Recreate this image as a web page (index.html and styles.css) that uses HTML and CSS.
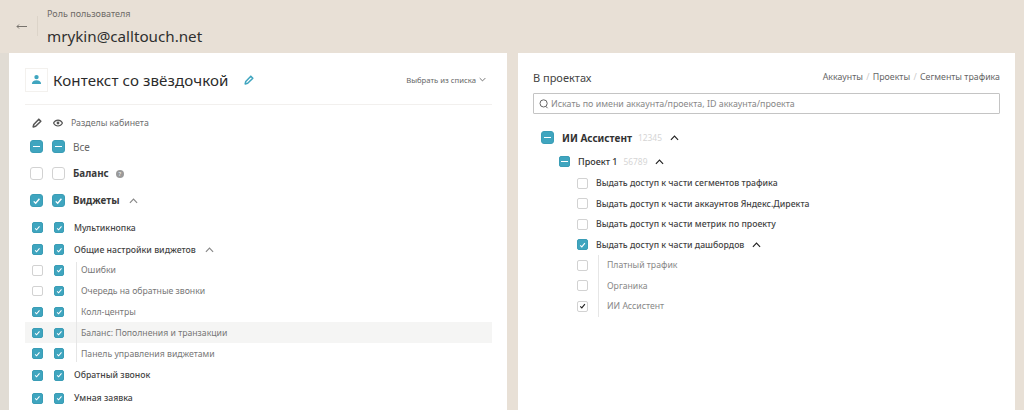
FILE: index.html
```html
<!DOCTYPE html>
<html lang="ru">
<head>
<meta charset="utf-8">
<title>Роль пользователя</title>
<link rel="stylesheet" href="styles.css">
</head>
<body>
<svg class="defs" width="0" height="0" aria-hidden="true">
  <symbol id="up" viewBox="0 0 10 6"><path d="M1 5l4-4 4 4" fill="none" stroke="currentColor" stroke-width="1.3"/></symbol>
  <symbol id="down" viewBox="0 0 10 6"><path d="M1 1l4 4 4-4" fill="none" stroke="currentColor" stroke-width="1.3"/></symbol>
  <symbol id="tick" viewBox="0 0 12 12"><path d="M3 6.4l2.1 2.1L9.2 3.6" fill="none" stroke="currentColor" stroke-width="1.5"/></symbol>
  <symbol id="pen" viewBox="0 0 12 12"><path d="M8.2 1.4l2.4 2.4-6.2 6.2-3 .7.7-3z" fill="none" stroke="currentColor" stroke-width="1.8" stroke-linejoin="round"/></symbol>
</svg>
<header class="top">
  <a class="back"><svg width="11" height="7" viewBox="0 0 11 7"><path d="M11 3.5H1M3 1.5L1 3.5 3 5.5" fill="none" stroke="#77736d" stroke-width="1"/></svg></a>
  <div class="top-text">
    <div class="role">Роль пользователя</div>
    <div class="email">mrykin@calltouch.net</div>
  </div>
</header>
<main class="panels">
  <section class="panel left">
    <div class="title-row">
      <span class="avatar"><svg width="11" height="11" viewBox="0 0 12 12"><circle cx="6" cy="3.4" r="2.4" fill="#3fa5bf"/><path d="M1 11c0-3 2-4.2 5-4.2s5 1.2 5 4.2z" fill="#3fa5bf"/></svg></span>
      <h1>Контекст со звёздочкой</h1>
      <svg class="title-pen" width="10" height="10"><use href="#pen"/></svg>
      <span class="picker">Выбрать из списка <svg width="7" height="5"><use href="#down"/></svg></span>
    </div>
    <div class="legend">
      <svg class="legend-pen" width="10" height="10"><use href="#pen"/></svg>
      <svg class="legend-eye" width="10" height="8" viewBox="0 0 12 9"><path d="M.6 4.5C2 2 3.8 1 6 1s4 1 5.4 3.5C10 7 8.2 8 6 8S2 7 .6 4.5z" fill="none" stroke="#555" stroke-width="1.3"/><circle cx="6" cy="4.5" r="1.7" fill="#555"/></svg>
      <span>Разделы кабинета</span>
    </div>

    <div class="row big"><span class="box on big-box"><i class="dash"></i></span><span class="box on big-box"><i class="dash"></i></span><span class="lbl plain-lg">Все</span></div>
    <div class="row big"><span class="box big-box"></span><span class="box big-box"></span><span class="lbl bold-lg">Баланс</span><span class="help">?</span></div>
    <div class="row big"><span class="box on big-box"><svg><use href="#tick"/></svg></span><span class="box on big-box"><svg><use href="#tick"/></svg></span><span class="lbl bold-lg">Виджеты</span><svg class="chev grey" width="9" height="6"><use href="#up"/></svg></div>

    <div class="row small h23 gap-top"><span class="box on"><svg><use href="#tick"/></svg></span><span class="box on"><svg><use href="#tick"/></svg></span><span class="lbl med">Мультикнопка</span></div>
    <div class="row small h21"><span class="box on"><svg><use href="#tick"/></svg></span><span class="box on"><svg><use href="#tick"/></svg></span><span class="lbl med">Общие настройки виджетов</span><svg class="chev grey" width="9" height="6"><use href="#up"/></svg></div>
    <div class="nest">
      <div class="row small sub"><span class="box"></span><span class="box on"><svg><use href="#tick"/></svg></span><span class="lbl sublbl">Ошибки</span></div>
      <div class="row small sub"><span class="box"></span><span class="box on"><svg><use href="#tick"/></svg></span><span class="lbl sublbl">Очередь на обратные звонки</span></div>
      <div class="row small sub"><span class="box on"><svg><use href="#tick"/></svg></span><span class="box on"><svg><use href="#tick"/></svg></span><span class="lbl sublbl">Колл-центры</span></div>
      <div class="row small sub hl"><span class="box on"><svg><use href="#tick"/></svg></span><span class="box on"><svg><use href="#tick"/></svg></span><span class="lbl sublbl">Баланс: Пополнения и транзакции</span></div>
      <div class="row small sub"><span class="box on"><svg><use href="#tick"/></svg></span><span class="box on"><svg><use href="#tick"/></svg></span><span class="lbl sublbl">Панель управления виджетами</span></div>
    </div>
    <div class="row small h23"><span class="box on"><svg><use href="#tick"/></svg></span><span class="box on"><svg><use href="#tick"/></svg></span><span class="lbl med">Обратный звонок</span></div>
    <div class="row small h23"><span class="box on"><svg><use href="#tick"/></svg></span><span class="box on"><svg><use href="#tick"/></svg></span><span class="lbl med">Умная заявка</span></div>
  </section>

  <section class="panel right">
    <div class="right-head">
      <h2>В проектах</h2>
      <nav class="crumbs">Аккаунты <b>/</b> Проекты <b>/</b> Сегменты трафика</nav>
    </div>
    <div class="search">
      <svg width="10" height="10" viewBox="0 0 10 10"><circle cx="4.6" cy="4.4" r="3.6" fill="none" stroke="#666" stroke-width="1"/><path d="M6.6 7.2l2 2" stroke="#666"/></svg>
      <span>Искать по имени аккаунта/проекта, ID аккаунта/проекта</span>
    </div>
    <div class="tree">
      <div class="t-acc"><span class="box on big-box"><i class="dash"></i></span><span class="acc-name">ИИ Ассистент</span><span class="num">12345</span><svg class="chev dark" width="9" height="6"><use href="#up"/></svg></div>
      <div class="t-proj"><span class="box on"><i class="dash"></i></span><span class="proj-name">Проект 1</span><span class="num n2">56789</span><svg class="chev dark" width="9" height="6"><use href="#up"/></svg></div>
      <div class="t-opts">
        <div class="t-row"><span class="box"></span><span class="opt">Выдать доступ к части сегментов трафика</span></div>
        <div class="t-row"><span class="box"></span><span class="opt">Выдать доступ к части аккаунтов Яндекс.Директа</span></div>
        <div class="t-row"><span class="box"></span><span class="opt">Выдать доступ к части метрик по проекту</span></div>
        <div class="t-row"><span class="box on"><svg><use href="#tick"/></svg></span><span class="opt">Выдать доступ к части дашбордов</span><svg class="chev dark" width="9" height="6"><use href="#up"/></svg></div>
        <div class="t-nest">
          <div class="t-row"><span class="box"></span><span class="t-sub">Платный трафик</span></div>
          <div class="t-row"><span class="box"></span><span class="t-sub">Органика</span></div>
          <div class="t-row"><span class="box"><svg class="blk"><use href="#tick"/></svg></span><span class="t-sub">ИИ Ассистент</span></div>
        </div>
      </div>
    </div>
  </section>
</main>
</body>
</html>
```

FILE: styles.css
```css
* { box-sizing: border-box; }
html, body { margin: 0; height: 410px; overflow: hidden; }
body {
  background: #e8e0d6;
  font-family: "Noto Sans", "Open Sans", sans-serif;
  color: #3a3a3a;
  display: flex;
  flex-direction: column;
}
.defs { position: absolute; }
.top { height: 53px; display: flex; align-items: flex-start; padding-left: 16px; }
.back { margin-top: 16px; width: 22px; border-right: 1px solid #dcd4c9; height: 20px; display: flex; align-items: center; }
.top-text { margin-left: 9px; }
.role { font-size: 9px; line-height: 12px; color: #6d6a66; margin-top: 8px; }
.email { font-size: 15.2px; line-height: 20px; color: #2f2f2f; margin-top: 6px; }

.panels { flex: 1; display: flex; gap: 11px; padding-left: 9px; min-height: 0; background: linear-gradient(90deg, #e1dcd4 9px, transparent 9px); }
.panel { background: #fff; overflow: hidden; }
.left { width: 498px; padding: 0 15px 0 16px; }
.right { width: 497px; padding: 0 15px 0 15px; }

.title-row { height: 52px; display: flex; align-items: center; border-bottom: 1px solid #f2f0ee; margin-bottom: 8px; padding-top: 2px; }
.avatar { width: 23px; height: 24px; border: 1px solid #f3f1ee; display: flex; align-items: center; justify-content: center; }
h1 { font-size: 15.1px; font-weight: 400; margin: 0 0 0 5px; color: #2b2b2b; letter-spacing: .1px; }
.title-pen { color: #3fa5bf; margin-left: 15px; }
.picker { margin-left: auto; margin-right: 6px; font-size: 7.7px; color: #666; display: flex; align-items: center; gap: 3px; }

.legend { height: 20px; display: flex; align-items: center; padding-left: 7px; font-size: 8.8px; color: #6f6f6f; }
.legend-pen { color: #555; }
.legend-eye { margin-left: 11px; }
.legend span { margin-left: 8px; }

.row { display: flex; align-items: center; }
.box {
  width: 11px; height: 11px; flex: none; border: 1px solid #d2d2d2; border-radius: 2px; background: #fff;
  display: flex; align-items: center; justify-content: center; color: #fff;
}
.box svg { width: 10px; height: 10px; color: #fff; }
.box svg.blk { color: #222; }
.box.on { background: #3fa5bf; border-color: #3a9db6; }
.big-box { width: 13px; height: 13px; border-radius: 3px; }
.big-box svg { width: 12px; height: 12px; }
.dash { width: 7px; height: 1.5px; background: #fff; display: block; }
.row.small .box { width: 10.5px; height: 10.5px; }
.row .box:first-child { margin-left: 7px; }
.row .box + .box { margin-left: 11px; }
.row.big { height: 27px; }
.row.big .box:first-child { margin-left: 5px; }
.row.big .box + .box { margin-left: 9px; }
.row.big .lbl { margin-left: 8px; }
.plain-lg { font-size: 10px; color: #666; }
.bold-lg { font-size: 9.8px; font-weight: 700; color: #3a3a3a; }
.help { width: 8px; height: 8px; border-radius: 50%; background: #9a9a9a; color: #fff; font-size: 6px; line-height: 8px; text-align: center; margin-left: 7px; }
.chev { margin-left: 9px; }
.chev.grey { color: #888; }
.chev.dark { color: #222; margin-left: 8px; }
.row.small .lbl { margin-left: 10px; }
.med { font-size: 8.7px; font-weight: 500; color: #444; }
.h23 { height: 23px; }
.h21 { height: 21px; }
.gap-top { margin-top: 2px; }
.sub { height: 20.8px; }
.hl { background: #f5f5f4; }
.row.small .sublbl { margin-left: 17px; font-size: 8.7px; color: #777; }
.nest { position: relative; }
.nest::before { content: ""; position: absolute; z-index: 1; left: 51px; width: 1px; top: 2px; bottom: 2px; background: #e6e6e6; }

.right-head { height: 40px; padding-top: 8px; display: flex; align-items: center; justify-content: space-between; }
h2 { font-size: 11px; font-weight: 400; margin: 0; color: #444; }
.crumbs { font-size: 8.8px; color: #666; }
.crumbs b { font-weight: 400; color: #ccc; padding: 0 1px; }
.search { height: 21px; border: 1px solid #c4c4c4; border-radius: 1px; display: flex; align-items: center; padding-left: 5px; gap: 2px; font-size: 8.9px; color: #888; }
.t-acc { display: flex; align-items: center; height: 27px; margin-top: 10px; padding-left: 8px; }
.acc-name { font-size: 10px; font-weight: 700; color: #333; margin-left: 8px; }
.num { font-size: 8.4px; color: #d5d5d5; margin-left: 6px; }
.t-proj { display: flex; align-items: center; height: 21px; padding-left: 26px; margin-bottom: 1px; }
.proj-name { font-size: 9px; font-weight: 500; color: #333; margin-left: 8px; }
.t-opts { padding-left: 44px; }
.t-row { display: flex; align-items: center; height: 20.5px; }
.opt { font-size: 8.7px; font-weight: 500; color: #444; margin-left: 8px; }
.t-nest { position: relative; }
.t-nest::before { content: ""; position: absolute; left: 21px; width: 1px; top: 0; bottom: 0; background: #e6e6e6; }
.t-sub { font-size: 8.7px; color: #888; margin-left: 19px; }
```
